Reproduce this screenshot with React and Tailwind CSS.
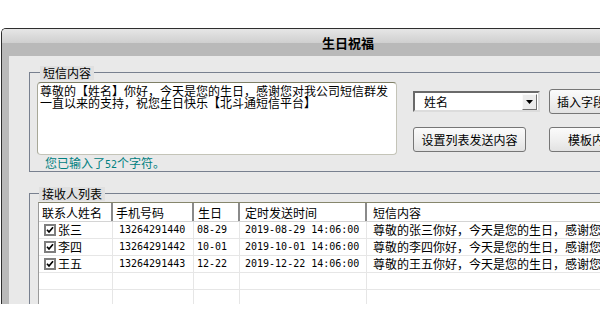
const rows = [
  { name: "张三", phone: "13264291440", bday: "08-29", time: "2019-08-29 14:06:00" },
  { name: "李四", phone: "13264291442", bday: "10-01", time: "2019-10-01 14:06:00" },
  { name: "王五", phone: "13264291443", bday: "12-22", time: "2019-12-22 14:06:00" },
];

function Check() {
  return (
    <div className="w-[12px] h-[12px] border-2 border-[#7e7e7e] bg-white flex items-center justify-center shrink-0">
      <svg width="8" height="8" viewBox="0 0 8 8">
        <path d="M1 3.8 L3 6 L7 1.2" fill="none" stroke="#000" strokeWidth="1.7" />
      </svg>
    </div>
  );
}

function Btn({ children, className = "" }) {
  return (
    <div
      className={
        "h-[25px] border border-[#767676] rounded-[3px] bg-[linear-gradient(to_bottom,#fbfbfb,#f0f0f0_50%,#e2e2e2)] flex items-center leading-[12px] whitespace-nowrap " +
        className
      }
    >
      {children}
    </div>
  );
}

export default function App() {
  const mono = "font-['DejaVu_Sans_Mono',monospace] text-[10px]";
  return (
    <div className="w-[600px] h-[316px] bg-white overflow-hidden font-['Noto_Sans_CJK_SC',sans-serif] text-[12px] text-black">
      <div className="mt-[28px] ml-[1px] w-[693px] h-[276px] border-l border-t border-[#2e2e2e] rounded-tl-[5px] overflow-hidden flex flex-col">
        <div className="h-[27px] shrink-0 flex items-center justify-center bg-[linear-gradient(to_bottom,#e6e6e6,#cfcfcf_14px,#b9b9b9_14px,#b9b9b9)] font-bold text-[13px] leading-[13px]">
          生日祝福
        </div>
        <div className="flex-1 flex min-h-0">
          <div className="w-[7px] bg-[#b9b9b9] shrink-0" />
          <div className="flex-1 bg-[#e9e9e9] pl-[20px] pt-[16px] overflow-hidden">
            {/* Group 1 */}
            <div className="relative w-[650px] h-[100px] border border-[#78808f]">
              <div className="absolute left-[10px] top-[-7px] h-[14px] px-[3px] bg-[#e0e0e0] leading-[14px]">
                短信内容
              </div>
              <div className="flex pl-[7px] pt-[9px]">
                <div className="flex flex-col">
                  <div className="w-[360px] h-[73px] bg-white border border-[#c4c4b8] border-t-[#7f7f66] border-l-[#a8a898] rounded-[4px] pl-[2px] pt-[2px] leading-[12px]">
                    尊敬的【姓名】你好，今天是您的生日，感谢您对我公司短信群发
                    <br />
                    一直以来的支持，祝您生日快乐【北斗通短信平台】
                  </div>
                  <div className="pl-[8px] mt-[2px] text-[#008080] leading-[12px]">
                    您已输入了<span className={mono}>52</span>个字符。
                  </div>
                </div>
                <div className="ml-[16px] mt-[7px] grid grid-cols-[127px_auto] gap-x-[9px] gap-y-[13px] items-center self-start">
                  <div className="h-[21px] border-2 border-t-[#6a6a6a] border-l-[#6a6a6a] border-b-[#dcdcdc] border-r-[#dcdcdc] bg-white flex items-center">
                    <span className="pl-[9px] flex-1 leading-[12px]">姓名</span>
                    <div className="w-[15px] h-[16px] mr-[1px] bg-[#ececec] border border-t-[#fafafa] border-l-[#fafafa] border-b-[#707070] border-r-[#707070] flex items-center justify-center">
                      <svg width="7" height="4" viewBox="0 0 7 4">
                        <path d="M0 0 H7 L3.5 4 Z" fill="#000" />
                      </svg>
                    </div>
                  </div>
                  <Btn className="px-[7px] w-fit">插入字段</Btn>
                  <Btn className="w-[113px] justify-center">设置列表发送内容</Btn>
                  <Btn className="w-[86px] justify-center">模板内容</Btn>
                </div>
              </div>
            </div>

            {/* Group 2 */}
            <div className="relative w-[650px] h-[200px] mt-[21px] border border-[#78808f]">
              <div className="absolute left-[9px] top-[-7px] h-[14px] px-[3px] bg-[#e0e0e0] leading-[14px]">
                接收人列表
              </div>
              <div className="ml-[8px] mt-[8px] w-[630px] h-[160px] bg-white border-t border-l border-[#9a9a9a] border-t-[#86866c]">
                <div className="flex h-[19px] border-b border-[#d4d4d4] items-center leading-[12px]">
                  <div className="w-[74px] h-full border-r-2 border-[#8a8a8a] pl-[3px] flex items-center pt-[2px]">联系人姓名</div>
                  <div className="w-[81px] h-full border-r-2 border-[#8a8a8a] pl-[3px] flex items-center pt-[2px]">手机号码</div>
                  <div className="w-[46px] h-full border-r-2 border-[#8a8a8a] pl-[4px] flex items-center pt-[2px]">生日</div>
                  <div className="w-[127px] h-full border-r-2 border-[#8a8a8a] pl-[5px] flex items-center pt-[2px]">定时发送时间</div>
                  <div className="flex-1 h-full pl-[6px] flex items-center pt-[2px]">短信内容</div>
                </div>
                {rows.map((r) => (
                  <div key={r.name} className="flex h-[17px] border-b border-[#e6e6e6] items-center leading-[12px]">
                    <div className="w-[74px] h-full border-r border-[#e6e6e6] pl-[5px] flex items-center gap-[2px]">
                      <Check />
                      <span>{r.name}</span>
                    </div>
                    <div className={"w-[81px] h-full border-r border-[#e6e6e6] pl-[6px] flex items-center " + mono}>{r.phone}</div>
                    <div className={"w-[46px] h-full border-r border-[#e6e6e6] pl-[3px] flex items-center " + mono}>{r.bday}</div>
                    <div className={"w-[127px] h-full border-r border-[#e6e6e6] pl-[5px] flex items-center " + mono}>{r.time}</div>
                    <div className="flex-1 h-full pl-[6px] flex items-center whitespace-nowrap overflow-hidden">
                      尊敬的{r.name}你好，今天是您的生日，感谢您对我公司短信群发一直以来的支持
                    </div>
                  </div>
                ))}
                {[0, 1].map((i) => (
                  <div key={i} className="flex h-[17px] border-b border-[#e6e6e6]">
                    <div className="w-[74px] h-full border-r border-[#e6e6e6]" />
                    <div className="w-[81px] h-full border-r border-[#e6e6e6]" />
                    <div className="w-[46px] h-full border-r border-[#e6e6e6]" />
                    <div className="w-[127px] h-full border-r border-[#e6e6e6]" />
                    <div className="flex-1 h-full" />
                  </div>
                ))}
              </div>
            </div>
          </div>
        </div>
      </div>
    </div>
  );
}
